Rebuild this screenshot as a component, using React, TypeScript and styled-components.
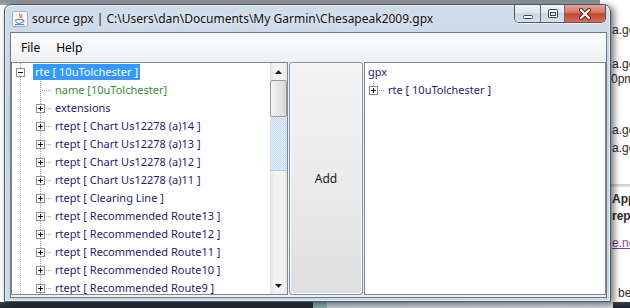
import React from "react";
import styled, { createGlobalStyle } from "styled-components";

const UI_FONT = `"Noto Sans", "Open Sans", "DejaVu Sans", sans-serif`;
const WEB_FONT = `"Liberation Sans", Arial, sans-serif`;

const GlobalStyle = createGlobalStyle`
  html, body { margin: 0; padding: 0; background: #ffffff; }
  body { overflow: hidden; }
  #root { width: 630px; height: 308px; }
`;

/* ---------- desktop & background ---------- */

const Desktop = styled.div`
  position: relative;
  width: 630px;
  height: 308px;
  overflow: hidden;
  display: flex;
  flex-direction: column;
  background:
    linear-gradient(#878c92, #a3a7ac) 0 0 / 600px 5px no-repeat,
    #ffffff;
`;

const PageArea = styled.div`
  flex: 1;
  overflow: hidden;
  font-family: ${WEB_FONT};
  font-size: 12px;
`;

const PageLine = styled.div<{ $gap: number; $indent?: number; $bold?: boolean; $link?: boolean }>`
  margin-top: ${(p) => p.$gap}px;
  padding-left: ${(p) => p.$indent ?? 612}px;
  height: 15px;
  line-height: 15px;
  white-space: nowrap;
  font-weight: ${(p) => (p.$bold ? 700 : 400)};
  color: ${(p) => (p.$link ? "#7b3f97" : "#2b2b2b")};
  text-decoration: ${(p) => (p.$link ? "underline" : "none")};
`;

const PageRule = styled.div<{ $gap: number }>`
  margin-top: ${(p) => p.$gap}px;
  margin-left: 600px;
  height: 3px;
  background: linear-gradient(#c9ced4, #e3e6ea);
`;

const Taskbar = styled.div`
  height: 6px;
  flex: none;
  display: flex;
  background: linear-gradient(#36404b, #1e262f);
`;

const TaskSlot = styled.div`
  margin-left: 313px;
  width: 300px;
  background: linear-gradient(90deg, #8fb1b4 0, #8fb1b4 14px, #c9d3da 14px, #d6dde2);
`;

/* ---------- window frame ---------- */

const Window = styled.div`
  position: absolute;
  left: 4px;
  top: 4px;
  width: 607px;
  height: 298px;
  box-sizing: border-box;
  border: 1px solid #4a5766;
  border-radius: 7px 7px 0 0;
  background: linear-gradient(180deg, #d0dcea 0%, #c4d3e3 35%, #cad8e7 100%);
  box-shadow: inset 0 0 0 1px rgba(255, 255, 255, 0.55), 3px 2px 7px rgba(0, 0, 0, 0.55);
  display: flex;
  flex-direction: column;
  padding: 0 3px 3px 5px;
  font-family: ${UI_FONT};
`;

const TitleBar = styled.div`
  height: 27px;
  flex: none;
  display: flex;
  align-items: flex-start;
`;

const TitleIcon = styled.svg`
  flex: none;
  margin: 6px 4px 0 2px;
`;

const TitleText = styled.div`
  flex: 1;
  min-width: 0;
  line-height: 27px;
  font-size: 12px;
  color: #111;
  white-space: nowrap;
  overflow: hidden;
  text-shadow: 0 0 6px rgba(255, 255, 255, 0.9);
`;

const CaptionGroup = styled.div`
  flex: none;
  width: 92px;
  height: 18px;
  margin-right: 1px;
  box-sizing: border-box;
  display: flex;
  border: 1px solid #4f5c6b;
  border-top: none;
  border-radius: 0 0 5px 5px;
  overflow: hidden;
  box-shadow: 0 1px 0 rgba(255, 255, 255, 0.6);
`;

const CaptionButton = styled.div<{ $w?: number; $close?: boolean }>`
  ${(p) => (p.$w ? `width: ${p.$w}px; flex: none;` : "flex: 1;")}
  box-sizing: border-box;
  display: flex;
  align-items: center;
  justify-content: center;
  background: ${(p) =>
    p.$close
      ? "linear-gradient(#e8a394 0%, #d8735f 45%, #c5432d 52%, #d2715c 100%)"
      : "linear-gradient(#eef3f8 0%, #dde6ef 45%, #c8d5e3 52%, #d7e2ed 100%)"};
  & + & {
    border-left: 1px solid #5d6a79;
  }
`;

/* ---------- client ---------- */

const Client = styled.div`
  flex: 1;
  min-height: 0;
  display: flex;
  flex-direction: column;
  border: 1px solid #6c7a89;
  background: #f0f0f0;
`;

const MenuBar = styled.div`
  height: 29px;
  flex: none;
  display: flex;
  align-items: center;
  padding-left: 2px;
  background: linear-gradient(#fbfcfd, #eef1f4);
`;

const MenuItem = styled.div`
  padding: 0 8px;
  font-size: 12px;
  color: #000;
`;

const Content = styled.div`
  flex: 1;
  min-height: 0;
  display: flex;
  gap: 1px;
  padding-bottom: 2px;
`;

const LeftPane = styled.div`
  width: 277px;
  flex: none;
  box-sizing: border-box;
  border: 1px solid #828790;
  background: #fff;
  display: flex;
`;

const RightPane = styled.div`
  flex: 1;
  box-sizing: border-box;
  border: 1px solid #828790;
  background: #fff;
  overflow: hidden;
`;

const Tree = styled.div`
  flex: 1;
  min-width: 0;
  overflow: hidden;
`;

const TreeRow = styled.div`
  height: 18px;
  display: flex;
  align-items: center;
  white-space: nowrap;
`;

const ConnectorSvg = styled.svg`
  flex: none;
  display: block;
`;

type Tone = "normal" | "selected" | "green";

const Label = styled.span<{ $tone: Tone }>`
  margin-left: 1px;
  padding: 0 2px;
  height: 16px;
  line-height: 16px;
  font-size: 11px;
  color: ${(p) => (p.$tone === "selected" ? "#fff" : p.$tone === "green" ? "#3b8a36" : "#1f1d6a")};
  background: ${(p) => (p.$tone === "selected" ? "#3399ff" : "transparent")};
`;

/* ---------- scrollbar ---------- */

const ScrollBar = styled.div`
  width: 17px;
  flex: none;
  display: flex;
  flex-direction: column;
  background: linear-gradient(90deg, #e2e2e2, #f1f1f1 25%, #f3f3f3 75%, #e6e6e6);
`;

const ArrowButton = styled.div`
  height: 17px;
  flex: none;
  display: flex;
  align-items: center;
  justify-content: center;
`;

const Thumb = styled.div`
  height: 37px;
  flex: none;
  box-sizing: border-box;
  border: 1px solid #9a9a9a;
  border-radius: 2px;
  background: linear-gradient(90deg, #f4f4f4, #e6e6e6 50%, #d6d6d6);
`;

const TrackPressed = styled.div`
  height: 53px;
  flex: none;
  border-bottom: 1px solid #b8c9da;
  background: repeating-conic-gradient(#bdd7ef 0 25%, #e9f2fb 0 50%) 0 0 / 2px 2px;
`;

const TrackRest = styled.div`
  flex: 1;
`;

/* ---------- add button ---------- */

const AddButton = styled.button`
  width: 74px;
  flex: none;
  box-sizing: border-box;
  margin: 0;
  padding: 0;
  border: 1px solid #8391a6;
  border-radius: 3px;
  background: linear-gradient(#f3f3f3, #ebebeb 50%, #dedede);
  box-shadow: inset 0 0 0 1px #f9fbfd;
  font-family: ${UI_FONT};
  font-size: 12px;
  color: #1b1b1b;
`;

/* ---------- drawings ---------- */

type Expander = "plus" | "minus";

interface ConnectorProps {
  vertical: "full" | "top" | "none";
  branch?: boolean;
  expander?: Expander;
}

const Connector: React.FC<ConnectorProps> = ({ vertical, branch, expander }) => (
  <ConnectorSvg width={20} height={18} viewBox="0 0 20 18" shapeRendering="crispEdges">
    {vertical !== "none" && (
      <line x1={8.5} x2={8.5} y1={0} y2={vertical === "full" ? 18 : 9} stroke="#a2a2a2" strokeDasharray="1 1" />
    )}
    {branch && <line x1={10} x2={20} y1={9.5} y2={9.5} stroke="#a2a2a2" strokeDasharray="1 1" />}
    {expander && (
      <g>
        <rect x={4.5} y={5.5} width={8} height={8} fill="#fff" stroke="#8f8f8f" />
        <rect x={6} y={9} width={5} height={1} fill="#161616" />
        {expander === "plus" && <rect x={8} y={7} width={1} height={5} fill="#161616" />}
      </g>
    )}
  </ConnectorSvg>
);

const Arrow: React.FC<{ up?: boolean }> = ({ up }) => (
  <svg width={7} height={4} viewBox="0 0 7 4">
    <polygon points={up ? "3.5,0 7,4 0,4" : "0,0 7,0 3.5,4"} fill="#1b1b1b" />
  </svg>
);

const JavaIcon = () => (
  <TitleIcon width={16} height={16} viewBox="0 0 16 16">
    <rect x={0.5} y={0.5} width={15} height={15} rx={2} fill="#f6f7f8" stroke="#a7afb8" />
    <path d="M8 2.2 C6.4 3.8 9.6 4.8 7.8 7" stroke="#e2661b" strokeWidth={1.1} fill="none" />
    <path d="M10 3.4 C9 4.8 10.8 5.6 9.6 7" stroke="#e2661b" strokeWidth={1} fill="none" />
    <path d="M3.8 8.6 H11 V9.8 C11 11.4 9.4 12.4 7.4 12.4 C5.4 12.4 3.8 11.4 3.8 9.8 Z" fill="none" stroke="#4f7fa3" strokeWidth={1} />
    <path d="M11 9.2 C12.6 9.2 12.6 11.2 10.8 11.2" fill="none" stroke="#4f7fa3" strokeWidth={0.9} />
    <path d="M3 13.6 H12.4" stroke="#4f7fa3" strokeWidth={1} />
  </TitleIcon>
);

const MinGlyph = () => (
  <svg width={12} height={14} viewBox="0 0 12 14">
    <rect x={1.5} y={8.5} width={9} height={3} rx={1} fill="#fff" stroke="#374352" />
  </svg>
);

const MaxGlyph = () => (
  <svg width={12} height={10} viewBox="0 0 12 10">
    <rect x={1.5} y={0.5} width={9} height={8} rx={1} fill="#fff" stroke="#374352" />
    <rect x={3.5} y={3.5} width={5} height={3} fill="#dfe6ee" stroke="#374352" />
  </svg>
);

const CloseGlyph = () => (
  <svg width={14} height={12} viewBox="0 0 14 12">
    <path d="M3 2 L11 10 M11 2 L3 10" stroke="#5b1f16" strokeWidth={4} strokeLinecap="round" />
    <path d="M3 2 L11 10 M11 2 L3 10" stroke="#ffffff" strokeWidth={2.2} strokeLinecap="round" />
  </svg>
);

/* ---------- data ---------- */

interface NodeRow {
  cells: ConnectorProps[];
  text: string;
  tone: Tone;
}

const childCells = (expander?: Expander): ConnectorProps[] => [
  { vertical: "full" },
  { vertical: "full", branch: true, expander },
];

const leftRows: NodeRow[] = [
  { cells: [{ vertical: "full", expander: "minus" }], text: "rte [ 10uTolchester ]", tone: "selected" },
  { cells: childCells(), text: "name [10uTolchester]", tone: "green" },
  { cells: childCells("plus"), text: "extensions", tone: "normal" },
  ...[
    "rtept [ Chart Us12278 (a)14 ]",
    "rtept [ Chart Us12278 (a)13 ]",
    "rtept [ Chart Us12278 (a)12 ]",
    "rtept [ Chart Us12278 (a)11 ]",
    "rtept [ Clearing Line ]",
    "rtept [ Recommended Route13 ]",
    "rtept [ Recommended Route12 ]",
    "rtept [ Recommended Route11 ]",
    "rtept [ Recommended Route10 ]",
    "rtept [ Recommended Route9 ]",
    "rtept [ Recommended Route8 ]",
  ].map((text) => ({ cells: childCells("plus"), text, tone: "normal" as Tone })),
];

const rightRows: NodeRow[] = [
  { cells: [], text: "gpx", tone: "normal" },
  { cells: [{ vertical: "top", branch: true, expander: "plus" }], text: "rte [ 10uTolchester ]", tone: "normal" },
];

const TreeView: React.FC<{ rows: NodeRow[] }> = ({ rows }) => (
  <>
    {rows.map((row, i) => (
      <TreeRow key={i}>
        {row.cells.map((c, j) => (
          <Connector key={j} {...c} />
        ))}
        <Label $tone={row.tone}>{row.text}</Label>
      </TreeRow>
    ))}
  </>
);

export default function App() {
  return (
    <>
      <GlobalStyle />
      <Desktop>
        <PageArea>
          <PageLine $gap={23}>a.google.com</PageLine>
          <PageLine $gap={19}>a.google.com</PageLine>
          <PageLine $gap={0} $indent={611}>0pm</PageLine>
          <PageLine $gap={36}>a.google.com</PageLine>
          <PageLine $gap={3}>a.google.com</PageLine>
          <PageRule $gap={28} />
          <PageLine $gap={5} $bold>Apps</PageLine>
          <PageLine $gap={2} $bold>report</PageLine>
          <PageLine $gap={12} $link>e.net</PageLine>
          <PageLine $gap={35} $indent={618}>be</PageLine>
        </PageArea>
        <Taskbar>
          <TaskSlot />
        </Taskbar>

        <Window>
          <TitleBar>
            <JavaIcon />
            <TitleText>source gpx | C:\Users\dan\Documents\My Garmin\Chesapeak2009.gpx</TitleText>
            <CaptionGroup>
              <CaptionButton $w={25}>
                <MinGlyph />
              </CaptionButton>
              <CaptionButton $w={24}>
                <MaxGlyph />
              </CaptionButton>
              <CaptionButton $close>
                <CloseGlyph />
              </CaptionButton>
            </CaptionGroup>
          </TitleBar>
          <Client>
            <MenuBar>
              <MenuItem>File</MenuItem>
              <MenuItem>Help</MenuItem>
            </MenuBar>
            <Content>
              <LeftPane>
                <Tree>
                  <TreeView rows={leftRows} />
                </Tree>
                <ScrollBar>
                  <ArrowButton>
                    <Arrow up />
                  </ArrowButton>
                  <Thumb />
                  <TrackPressed />
                  <TrackRest />
                  <ArrowButton>
                    <Arrow />
                  </ArrowButton>
                </ScrollBar>
              </LeftPane>
              <AddButton>Add</AddButton>
              <RightPane>
                <TreeView rows={rightRows} />
              </RightPane>
            </Content>
          </Client>
        </Window>
      </Desktop>
    </>
  );
}
